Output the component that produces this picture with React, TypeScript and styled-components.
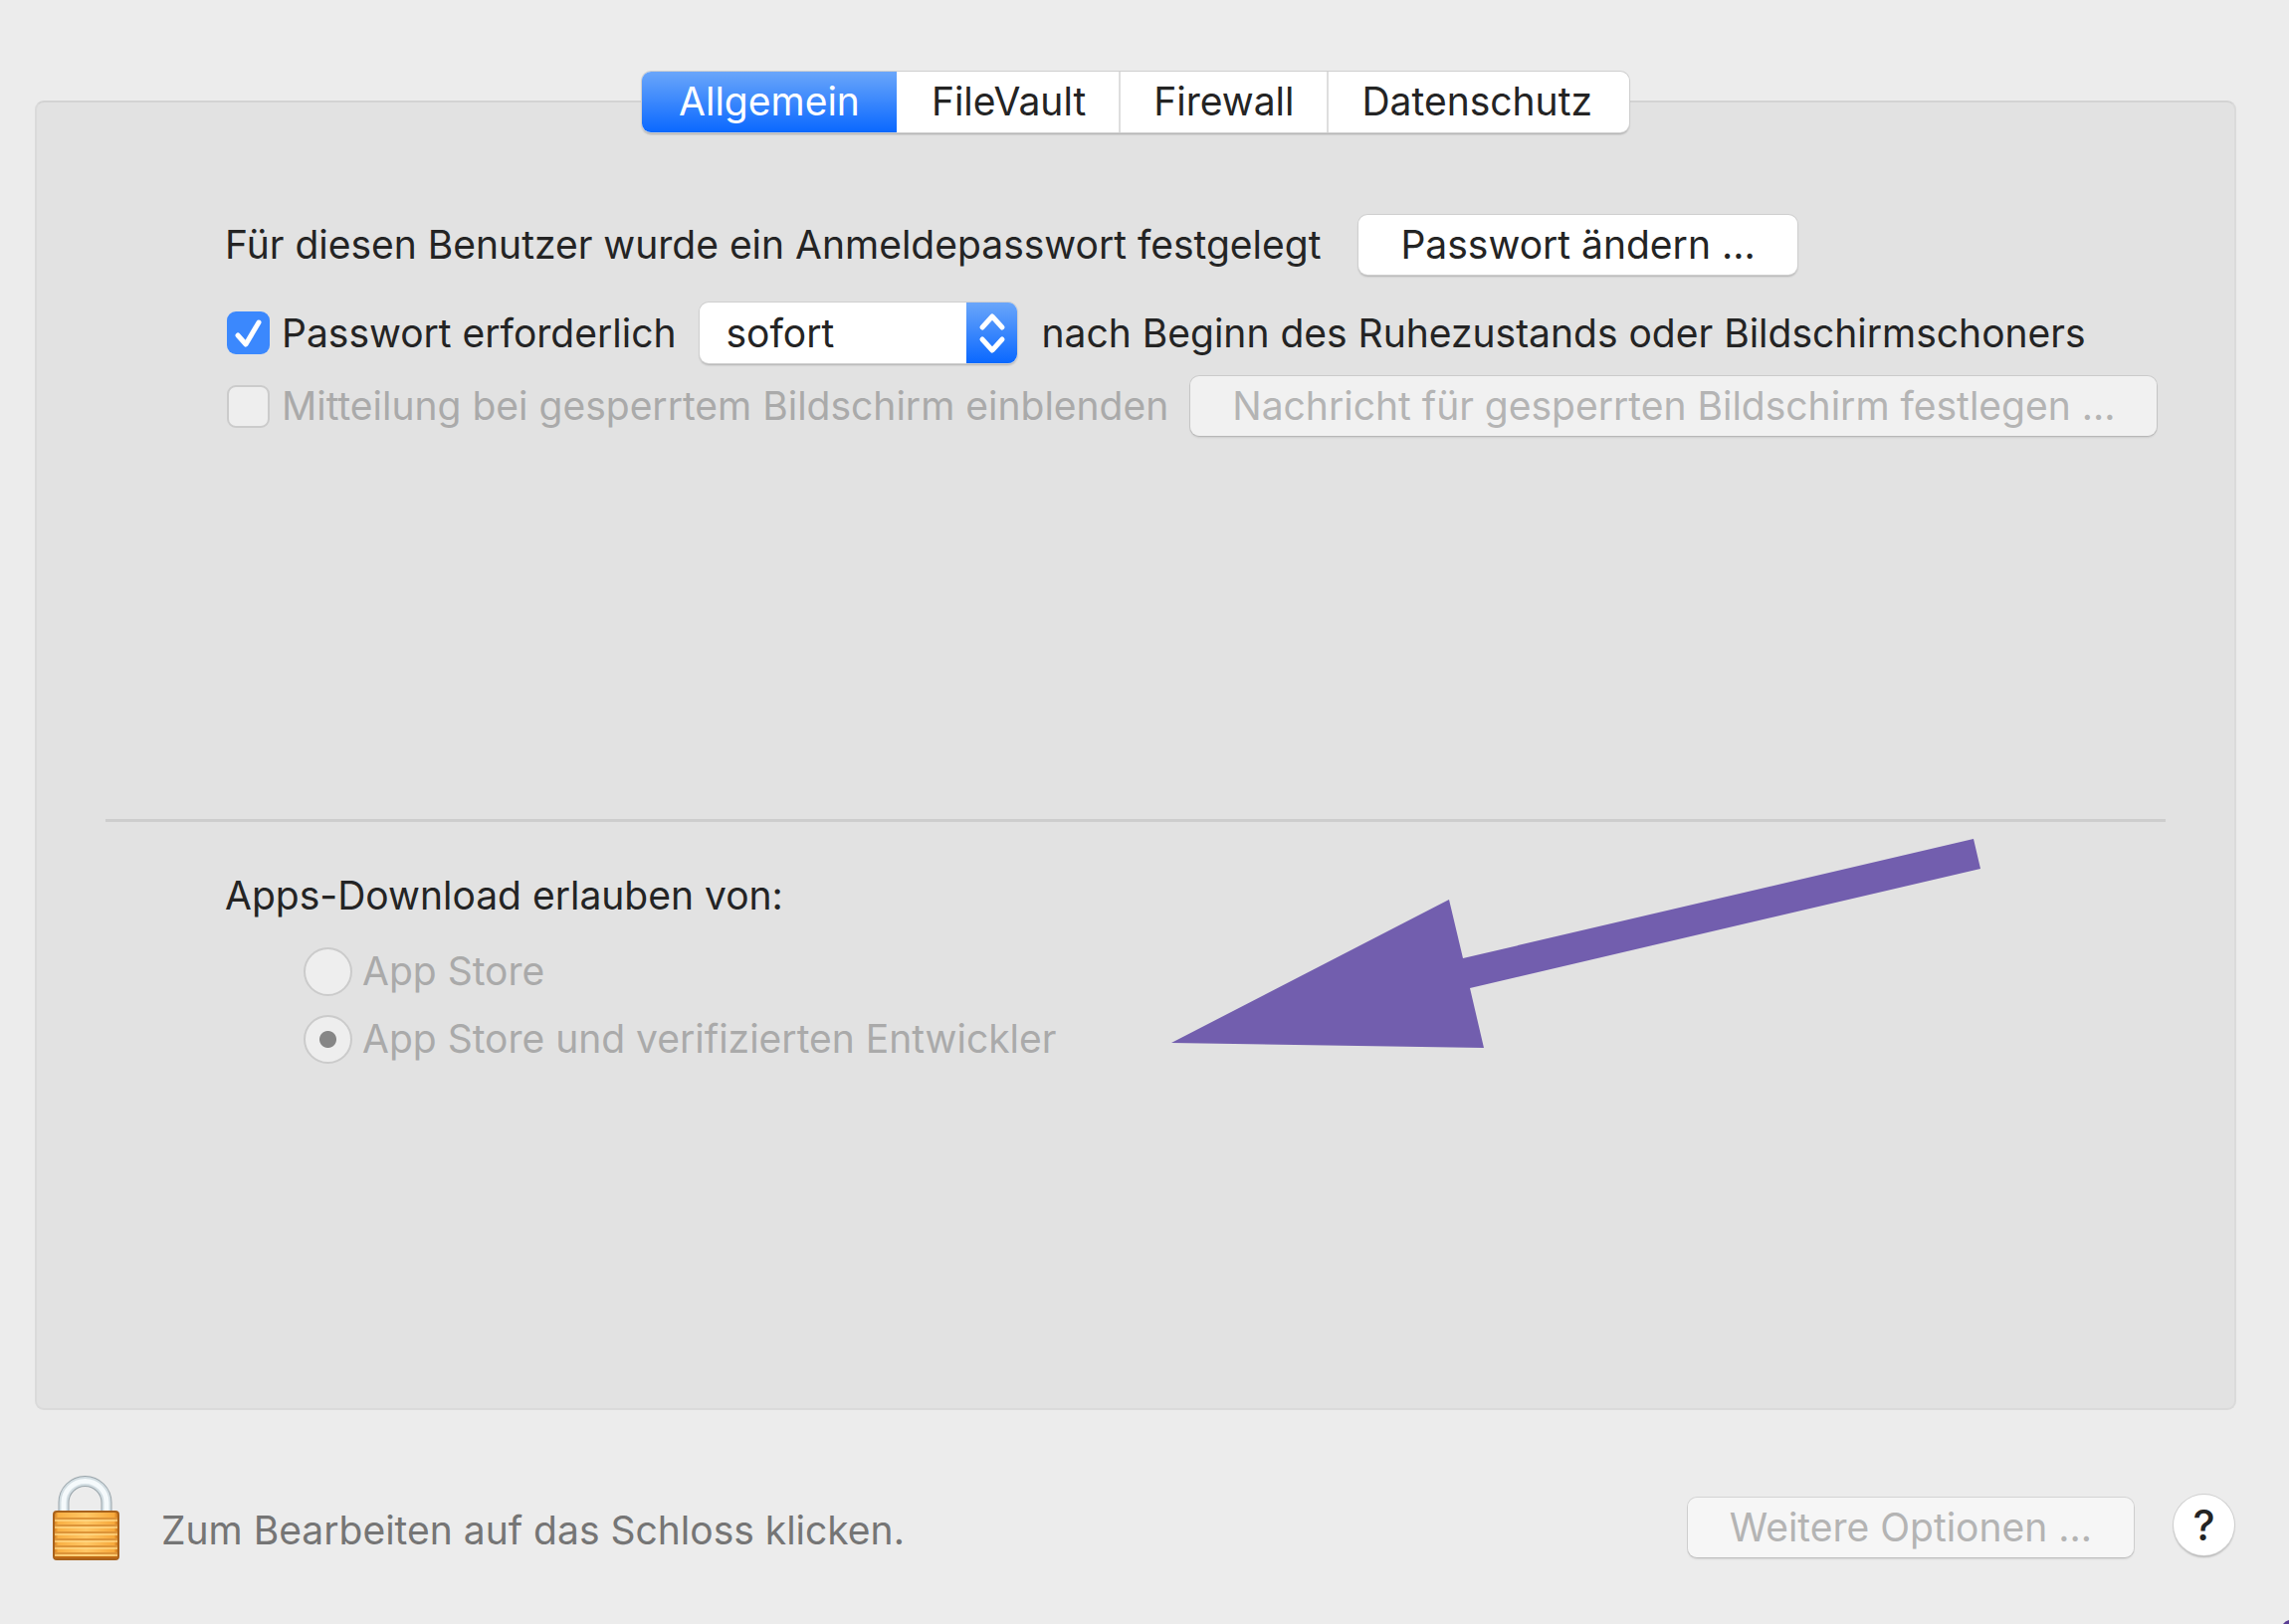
import React, { useState } from "react";
import styled, { createGlobalStyle, css } from "styled-components";

const GlobalStyle = createGlobalStyle`
  *, *::before, *::after { box-sizing: border-box; }
  body { margin: 0; background: #ececec; }
  button, select, input { font: inherit; color: inherit; margin: 0; }
`;

const Page = styled.main`
  display: flex;
  flex-direction: column;
  position: relative;
  min-height: 100vh;
  padding: 72px 53px 62px 35px;
  font: 400 39px/48px Inter, "Liberation Sans", sans-serif;
  color: #242424;
  background: #ececec;
`;

const TabBar = styled.nav`
  display: flex;
  align-self: center;
  position: relative;
  z-index: 1;
  height: 61px;
  margin-bottom: -32px;
  border-radius: 9px;
  background: #fff;
  box-shadow: 0 0 0 1px #cfcfcf, 0 2px 2px rgba(0, 0, 0, 0.25);
`;

const Tab = styled.button<{ $active: boolean }>`
  padding: 0 33px 2px;
  border: 0;
  background: none;
  & + & { border-left: 2px solid #dedede; }
  &:first-child { border-radius: 9px 0 0 9px; padding: 0 37px 2px; }
  &:last-child { border-radius: 0 9px 9px 0; padding: 0 37px 2px 33px; }
  ${(p) =>
    p.$active &&
    css`
      color: #fff;
      background: linear-gradient(#6aa6fa, #0a68ff);
      && + button { border-left-color: transparent; }
    `}
`;

const Panel = styled.section`
  display: flex;
  flex-direction: column;
  flex: 1;
  border: 2px solid #dadada;
  border-top-color: #d3d3d3;
  border-radius: 9px;
  background: #e2e2e2;
`;

const Group = styled.div<{ $grow: number }>`
  position: relative;
  flex: ${(p) => p.$grow} 1 0;
  padding: 0 69px 0 189px;
`;

const LoginForm = styled.div`
  padding-top: 113px;
`;

const Row = styled.div<{ $gap: number; $space: number }>`
  display: flex;
  align-items: center;
  gap: ${(p) => p.$gap}px;
  margin-bottom: ${(p) => p.$space}px;
  white-space: nowrap;
`;

const PushButton = styled.button`
  height: 60px;
  padding: 0 42px;
  border: 0;
  border-radius: 9px;
  background: #fff;
  white-space: nowrap;
  box-shadow: 0 0 0 1px #cfcfcf, 0 2px 2px rgba(0, 0, 0, 0.22);
  &:disabled {
    color: #b4b4b4;
    background: rgba(255, 255, 255, 0.5);
    box-shadow: 0 0 0 1px rgba(0, 0, 0, 0.1), 0 2px 2px rgba(0, 0, 0, 0.1);
  }
`;

const Option = styled.label<{ $muted?: boolean }>`
  display: flex;
  align-items: center;
  gap: 12px;
  padding-left: 2px;
  color: ${(p) => (p.$muted ? "#aaaaaa" : "inherit")};
`;

const CheckBox = styled.span`
  display: grid;
  width: 43px;
  height: 43px;
  > * { grid-area: 1 / 1; }
`;

const CheckInput = styled.input`
  appearance: none;
  width: 43px;
  height: 43px;
  border: 2px solid #cbcbcb;
  border-radius: 9px;
  background: #fff;
  &:checked { border: 0; background: #3b88fd; }
  &:disabled { background: #eeeeee; }
`;

const CheckMark = styled.svg`
  width: 43px;
  height: 43px;
  pointer-events: none;
`;

const SelectBox = styled.span`
  display: grid;
  grid-template-columns: 1fr 51px;
  width: 319px;
  height: 61px;
  border-radius: 9px;
  background: #fff;
  overflow: hidden;
  box-shadow: 0 0 0 1px #cfcfcf, 0 2px 2px rgba(0, 0, 0, 0.22);
`;

const Select = styled.select`
  appearance: none;
  grid-area: 1 / 1 / 2 / 3;
  padding: 0 26px;
  border: 0;
  background: none;
`;

const Stepper = styled.svg`
  grid-area: 1 / 2;
  width: 51px;
  height: 61px;
  pointer-events: none;
  background: linear-gradient(#6aa6fa, #0a68ff);
`;

const Divider = styled.hr`
  width: calc(100% - 138px);
  height: 3px;
  margin: 0 auto;
  border: 0;
  background: #cdcdcd;
`;

const Sources = styled.fieldset`
  display: flex;
  flex-direction: column;
  gap: 19px;
  margin: 0;
  padding: 0 0 0 79px;
  border: 0;
`;

const SourceForm = styled.div`
  padding-top: 50px;
`;

const Legend = styled.legend`
  margin: 0 0 28px -79px;
  padding: 0;
`;

const Radio = styled.input`
  appearance: none;
  width: 49px;
  height: 49px;
  border: 2px solid #cbcbcb;
  border-radius: 50%;
  background: #eeeeee;
  &:checked { background: radial-gradient(circle, #868686 8px, #eeeeee 9px); }
`;

const SourceOption = styled(Option)`
  gap: 10px;
  height: 49px;
  padding-left: 0;
`;

const Arrow = styled.svg`
  position: absolute;
  left: 1140px;
  top: 17px;
  width: 814px;
  height: 211px;
  pointer-events: none;
`;

const Footer = styled.footer`
  display: flex;
  align-items: flex-end;
  margin-top: 65px;
  padding: 0 2px 0 15px;
  white-space: nowrap;
`;

const LockButton = styled.button`
  display: flex;
  padding: 0;
  border: 0;
  background: none;
`;

const Hint = styled.p`
  flex: 1;
  margin: 0 0 8px 40px;
  color: #757575;
`;

const Actions = styled.div`
  display: flex;
  gap: 40px;
  align-items: flex-end;
  padding-bottom: 5px;
`;

const HelpButton = styled.button`
  width: 61px;
  height: 61px;
  margin-bottom: 2px;
  padding: 0;
  border: 0;
  border-radius: 50%;
  background: #fff;
  font-size: 42px;
  font-weight: 500;
  box-shadow: 0 0 0 1px #cfcfcf, 0 2px 2px rgba(0, 0, 0, 0.25);
`;

const CornerMark = styled.svg`
  position: absolute;
  right: 0;
  bottom: 0;
  width: 6px;
  height: 4px;
`;

const TABS = ["Allgemein", "FileVault", "Firewall", "Datenschutz"];

function LockIcon() {
  return (
    <svg width="72" height="88" viewBox="0 0 72 88" aria-hidden="true">
      <defs>
        <linearGradient id="brass" x1="0" x2="1">
          <stop offset="0" stopColor="#d07a1c" />
          <stop offset="0.07" stopColor="#f9b044" />
          <stop offset="0.5" stopColor="#ffc765" />
          <stop offset="0.93" stopColor="#f7a93c" />
          <stop offset="1" stopColor="#c87016" />
        </linearGradient>
      </defs>
      <path d="M14 37V28a21.500 21.500 0 0 1 43 0v9" fill="none" stroke="#99a4aa" strokeWidth="11" />
      <path d="M14 37V28a21.500 21.500 0 0 1 43 0v9" fill="none" stroke="#d3dee3" strokeWidth="9" />
      <path d="M14 37V28a21.500 21.500 0 0 1 43 0v9" fill="none" stroke="#f5fafc" strokeWidth="5" />
      <rect x="4" y="37" width="65" height="48" rx="3" fill="url(#brass)" stroke="#a8621c" strokeWidth="2" />
      {[43, 50, 57, 64, 71, 78].map((y) => (
        <g key={y}>
          <rect x="5" y={y} width="63" height="2" fill="#dd9438" />
          <rect x="5" y={y + 2} width="63" height="2" fill="#ffd988" opacity="0.7" />
        </g>
      ))}
      <rect x="5" y="82" width="63" height="2" fill="#bf6a14" />
    </svg>
  );
}

export default function App() {
  const [tab, setTab] = useState(TABS[0]);
  const [required, setRequired] = useState(true);

  return (
    <Page>
      <GlobalStyle />
      <TabBar>
        {TABS.map((name) => (
          <Tab key={name} $active={name === tab} onClick={() => setTab(name)}>
            {name}
          </Tab>
        ))}
      </TabBar>
      <Panel>
        <Group $grow={11}>
          <LoginForm>
            <Row $gap={38} $space={28}>
              <span>Für diesen Benutzer wurde ein Anmeldepasswort festgelegt</span>
              <PushButton>Passwort ändern ...</PushButton>
            </Row>
            <Row $gap={24} $space={13}>
              <Option>
                <CheckBox>
                  <CheckInput type="checkbox" checked={required} onChange={(e) => setRequired(e.target.checked)} />
                  {required && (
                    <CheckMark viewBox="0 0 43 43" aria-hidden="true">
                      <path d="M11 24l8 9L32 11" fill="none" stroke="#fff" strokeWidth="5" strokeLinecap="round" strokeLinejoin="round" />
                    </CheckMark>
                  )}
                </CheckBox>
                Passwort erforderlich
              </Option>
              <SelectBox>
                <Select aria-label="Passwort erforderlich nach" defaultValue="sofort">
                  <option>sofort</option>
                </Select>
                <Stepper viewBox="0 0 51 61" aria-hidden="true">
                  <path d="M16 25l10-11 10 11M16 37l10 11 10-11" fill="none" stroke="#fff" strokeWidth="5" strokeLinecap="round" strokeLinejoin="round" />
                </Stepper>
              </SelectBox>
              <span>nach Beginn des Ruhezustands oder Bildschirmschoners</span>
            </Row>
            <Row $gap={22} $space={0}>
              <Option $muted>
                <CheckBox>
                  <CheckInput type="checkbox" disabled />
                </CheckBox>
                Mitteilung bei gesperrtem Bildschirm einblenden
              </Option>
              <PushButton disabled>Nachricht für gesperrten Bildschirm festlegen ...</PushButton>
            </Row>
          </LoginForm>
        </Group>
        <Divider />
        <Group $grow={9}>
          <SourceForm>
            <Sources>
              <Legend>Apps-Download erlauben von:</Legend>
              <SourceOption $muted>
                <Radio type="radio" name="source" disabled />
                App Store
              </SourceOption>
              <SourceOption $muted>
                <Radio type="radio" name="source" disabled defaultChecked />
                App Store und verifizierten Entwickler
              </SourceOption>
            </Sources>
          </SourceForm>
          <Arrow viewBox="0 0 814 211" aria-hidden="true">
            <path d="M0 205L279 61L293 120L806 0L813 30L300 150L314 210Z" fill="#725eae" />
          </Arrow>
        </Group>
      </Panel>
      <Footer>
        <LockButton aria-label="Schloss">
          <LockIcon />
        </LockButton>
        <Hint>Zum Bearbeiten auf das Schloss klicken.</Hint>
        <Actions>
          <PushButton disabled>Weitere Optionen ...</PushButton>
          <HelpButton aria-label="Hilfe">?</HelpButton>
        </Actions>
      </Footer>
      <CornerMark viewBox="0 0 6 4" aria-hidden="true">
        <path d="M0 4Q2 1 6 0V4Z" fill="#5a3d94" />
      </CornerMark>
    </Page>
  );
}
